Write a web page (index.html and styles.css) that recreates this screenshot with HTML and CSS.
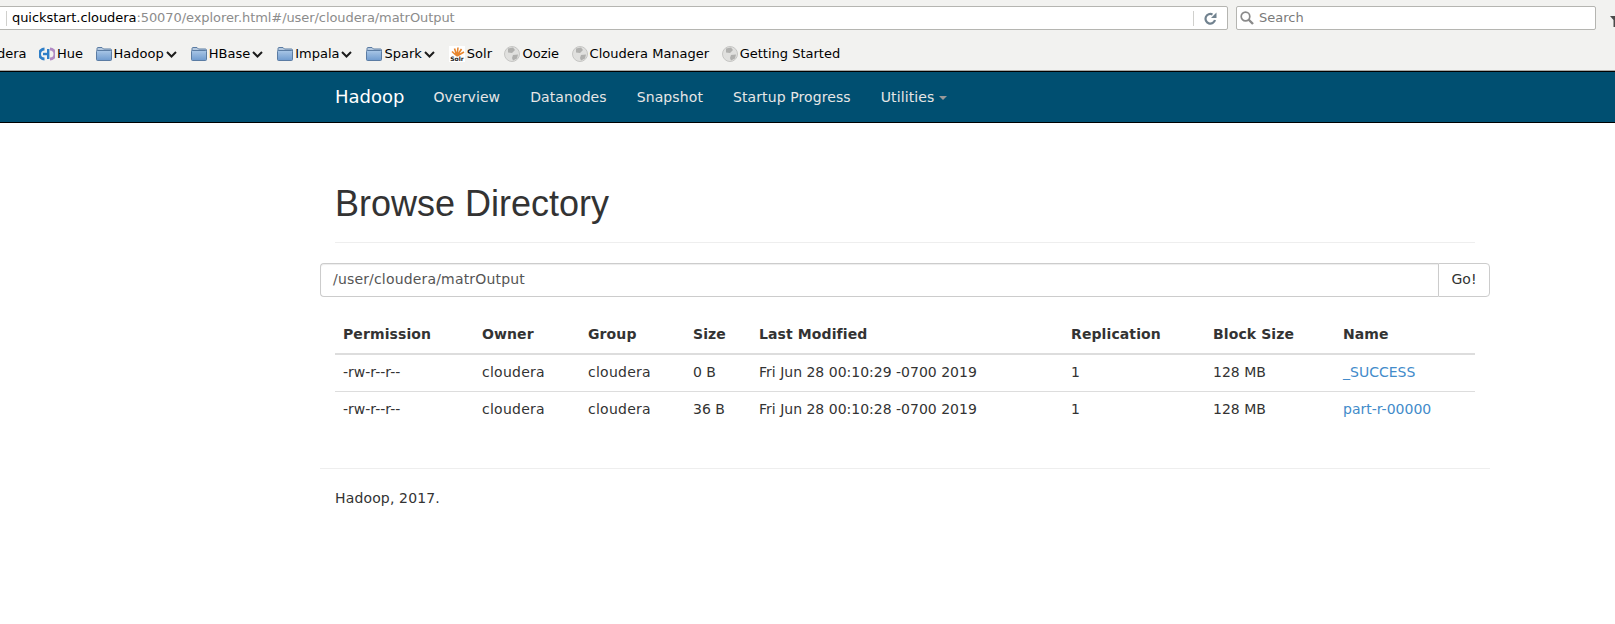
FILE: index.html
```html
<!DOCTYPE html>
<html lang="en">
<head>
  <meta charset="UTF-8">
  <title>Browsing HDFS</title>
  <link rel="stylesheet" href="styles.css">
</head>
<body>
  <svg class="defs" width="0" height="0">
    <defs>
      <linearGradient id="folder-fill" x1="0" y1="0" x2="0" y2="1">
        <stop offset="0" stop-color="#a9c6e6"/>
        <stop offset="1" stop-color="#6f9bcf"/>
      </linearGradient>
    </defs>
    <symbol id="folder" viewBox="0 0 16 16">
      <path d="M1 4V2.500C1 2 1.400 1.500 2 1.500H6L7.500 3H14.500C15 3 15.500 3.500 15.500 4V5H1Z" fill="#b4c8de" stroke="#5b7ca3"/>
      <rect x="0.500" y="4.500" width="15" height="10" rx="1" fill="url(#folder-fill)" stroke="#5b7ca3"/>
    </symbol>
    <symbol id="chevron" viewBox="0 0 11 7">
      <path d="M1 1L5.500 5.500L10 1" fill="none" stroke="#1c1c1c" stroke-width="2"/>
    </symbol>
    <symbol id="globe" viewBox="0 0 16 16">
      <circle cx="8" cy="8" r="7.500" fill="#e0e0de" stroke="#c6c6c4"/>
      <path d="M4 2.500L9 1.500L11 4L8 7L4 6.500ZM9 9L14 8.500L13 12.500L9 14.500L8 12Z" fill="#b0b0ae"/>
    </symbol>
  </svg>

  <div class="chrome">
    <div class="toolbar">
      <div class="urlbar">
        <span class="sep sep-left"></span>
        <span class="url"><span class="host">quickstart.cloudera</span>:50070/explorer.html#/user/cloudera/matrOutput</span>
        <span class="sep"></span>
        <svg class="reload" width="13" height="13" viewBox="0 0 13 13">
          <path d="M11 8A4.800 4.800 0 1 1 8.500 2.500" fill="none" stroke="#71828f" stroke-width="2.200"/>
          <path d="M12.500 0.500V6H7Z" fill="#71828f"/>
        </svg>
      </div>
      <div class="searchbar">
        <svg width="14" height="14" viewBox="0 0 14 14">
          <circle cx="5.500" cy="5.500" r="4.300" fill="none" stroke="#8a8a8a" stroke-width="1.700"/>
          <path d="M8.500 8.500L13 13" stroke="#8a8a8a" stroke-width="2.400"/>
        </svg>
        <span>Search</span>
      </div>
      <svg class="edge-icon" width="10" height="12" viewBox="0 0 10 12">
        <path d="M0 1H10L6.500 5V12H3.500V5Z" fill="#4a4a4a"/>
      </svg>
    </div>
    <div class="bookmarks">
      <span class="mark mark-first">dera</span>
      <span class="mark">
        <svg width="16" height="16" viewBox="0 0 16 16">
          <path d="M5.500 1.500A6.500 6.500 0 0 0 5.500 14.500V11.500A3.500 3.500 0 0 1 5.500 4.500Z" fill="#2f7fc8"/>
          <path d="M11 1.500A6.500 6.500 0 0 1 11 14.500V11.500A3.500 3.500 0 0 0 11 4.500Z" fill="#b08ac4"/>
          <rect x="4" y="6.800" width="6" height="2.400" fill="#2f7fc8"/>
          <rect x="8" y="3" width="2.400" height="10" fill="#2f7fc8"/>
        </svg>Hue</span>
      <span class="mark"><svg width="16" height="16"><use href="#folder"/></svg>Hadoop<svg class="chev" width="11" height="7"><use href="#chevron"/></svg></span>
      <span class="mark"><svg width="16" height="16"><use href="#folder"/></svg>HBase<svg class="chev" width="11" height="7"><use href="#chevron"/></svg></span>
      <span class="mark"><svg width="16" height="16"><use href="#folder"/></svg>Impala<svg class="chev" width="11" height="7"><use href="#chevron"/></svg></span>
      <span class="mark"><svg width="16" height="16"><use href="#folder"/></svg>Spark<svg class="chev" width="11" height="7"><use href="#chevron"/></svg></span>
      <span class="mark">
        <svg width="16" height="16" viewBox="0 0 16 16">
          <rect width="16" height="16" fill="#fff"/>
          <path d="M8 10L3 5.500M8 10L5.500 2.500M8 10L9 1.500M8 10L12.500 3M8 10L15 6" stroke="#e8862e" stroke-width="1.600"/>
          <text class="solr-word" x="8" y="15" text-anchor="middle">Solr</text>
        </svg>Solr</span>
      <span class="mark"><svg width="16" height="16"><use href="#globe"/></svg>Oozie</span>
      <span class="mark"><svg width="16" height="16"><use href="#globe"/></svg>Cloudera Manager</span>
      <span class="mark"><svg width="16" height="16"><use href="#globe"/></svg>Getting Started</span>
    </div>
  </div>

  <nav class="navbar">
    <div class="nav-inner">
      <a class="brand">Hadoop</a>
      <a>Overview</a>
      <a>Datanodes</a>
      <a>Snapshot</a>
      <a>Startup Progress</a>
      <a>Utilities <b class="caret"></b></a>
    </div>
  </nav>

  <div class="container">
    <div class="page-header">
      <h1>Browse Directory</h1>
    </div>

    <div class="input-group">
      <div class="form-control">/user/cloudera/matrOutput</div>
      <button class="go">Go!</button>
    </div>

    <div class="table-wrap">
      <table>
        <colgroup>
          <col class="c-perm"><col class="c-owner"><col class="c-group"><col class="c-size">
          <col class="c-date"><col class="c-repl"><col class="c-block"><col class="c-name">
        </colgroup>
        <thead>
          <tr>
            <th>Permission</th><th>Owner</th><th>Group</th><th>Size</th>
            <th>Last Modified</th><th>Replication</th><th>Block Size</th><th>Name</th>
          </tr>
        </thead>
        <tbody>
          <tr>
            <td>-rw-r--r--</td><td class="who">cloudera</td><td class="who">cloudera</td><td>0 B</td>
            <td>Fri Jun 28 00:10:29 -0700 2019</td><td>1</td><td>128 MB</td><td><a>_SUCCESS</a></td>
          </tr>
          <tr>
            <td>-rw-r--r--</td><td class="who">cloudera</td><td class="who">cloudera</td><td>36 B</td>
            <td>Fri Jun 28 00:10:28 -0700 2019</td><td>1</td><td>128 MB</td><td><a>part-r-00000</a></td>
          </tr>
        </tbody>
      </table>
    </div>

    <hr>
    <footer>Hadoop, 2017.</footer>
  </div>
</body>
</html>
```

FILE: styles.css
```css
body {
  margin: 0;
  height: 624px;
  overflow: hidden;
  background-color: #fff;
  color: #333;
  font-family: "DejaVu Sans", sans-serif;
  font-size: 14px;
  line-height: 20px;
}
.defs {
  display: block;
}

/* browser chrome */
.chrome {
  height: 70px;
  background-color: #f2f2f0;
  border-bottom: 1px solid #a8a8a5;
  overflow: hidden;
}
.toolbar {
  display: flex;
  align-items: flex-start;
  height: 37px;
  padding-top: 6px;
  box-sizing: border-box;
}
.urlbar {
  display: flex;
  align-items: center;
  flex: none;
  box-sizing: border-box;
  width: 1232px;
  height: 24px;
  margin-left: -4px;
  padding: 0 10px 0 9px;
  background-color: #fff;
  border: 1px solid #b5b5b1;
  border-radius: 2px;
}
.url {
  flex: 1;
  color: #8c8c8c;
  font-size: 13px;
  letter-spacing: -0.07px;
}
.host {
  color: #000;
}
.sep {
  width: 1px;
  height: 15px;
  margin-right: 10px;
  background-color: #d0d0cd;
}
.sep-left {
  margin-right: 5px;
}
.searchbar {
  display: flex;
  align-items: center;
  flex: none;
  gap: 5px;
  box-sizing: border-box;
  width: 360px;
  height: 24px;
  margin-left: 8px;
  padding-left: 3px;
  background-color: #fff;
  border: 1px solid #b5b5b1;
  border-radius: 2px;
  color: #7a7a7a;
  font-size: 13px;
}
.edge-icon {
  flex: none;
  margin: 9px 0 0 14px;
}
.bookmarks {
  display: flex;
  align-items: center;
  gap: 12.5px;
  box-sizing: border-box;
  height: 33px;
  padding-top: 1px;
  color: #000;
  font-size: 13px;
}
.mark {
  display: flex;
  align-items: center;
  gap: 2px;
  white-space: nowrap;
}
.mark-first {
  margin-left: -3px;
}
.chev {
  margin-right: 1.5px;
}
.solr-word {
  fill: #1c1c1c;
  font-family: "DejaVu Sans", sans-serif;
  font-size: 6px;
  font-weight: bold;
}

/* navbar */
.navbar {
  height: 50px;
  background-color: #004f71;
  border-top: 1px solid #000;
  border-bottom: 1px solid #000;
}
.nav-inner {
  display: flex;
  align-items: center;
  height: 50px;
  margin-left: 320px;
}
.nav-inner a {
  padding: 15px;
  color: #e6e6e6;
  letter-spacing: 0.1px;
}
.nav-inner .brand {
  padding-right: 14px;
  color: #fff;
  font-size: 18px;
  letter-spacing: 0;
}
.caret {
  display: inline-block;
  vertical-align: middle;
  border-top: 4px solid #999;
  border-left: 4px solid transparent;
  border-right: 4px solid transparent;
}

/* page */
.container {
  box-sizing: border-box;
  width: 1170px;
  margin-left: 320px;
}
.page-header {
  margin: 0 15px;
  padding-bottom: 18px;
  border-bottom: 1px solid #eee;
}
h1 {
  margin: 0;
  padding-top: 61px;
  color: #333;
  font-family: "Liberation Sans", sans-serif;
  font-size: 36px;
  font-weight: 500;
  line-height: 40px;
}
.input-group {
  display: flex;
  height: 34px;
  margin-top: 20px;
}
.form-control {
  flex: 1;
  padding: 5px 12px 7px;
  color: #555;
  letter-spacing: 0.17px;
  border: 1px solid #ccc;
  border-right: none;
  border-radius: 4px 0 0 4px;
  box-shadow: inset 0 1px 1px rgba(0, 0, 0, 0.075);
}
.go {
  width: 52px;
  padding: 0 0 2px;
  color: #333;
  background-color: #fff;
  border: 1px solid #ccc;
  border-radius: 0 4px 4px 0;
  font-family: inherit;
  font-size: 14px;
}
.table-wrap {
  margin: 20px 15px 0;
}
table {
  width: 1140px;
  border-collapse: collapse;
  table-layout: fixed;
}
th, td {
  padding: 7px 8px 9px;
  text-align: left;
}
th {
  letter-spacing: 0.1px;
  border-bottom: 2px solid #ddd;
}
td {
  border-top: 1px solid #ddd;
}
thead + tbody tr:first-child td {
  border-top: none;
}
td.who {
  letter-spacing: 0.25px;
}
td a {
  color: #428bca;
}
.c-perm { width: 139px; }
.c-owner { width: 106px; }
.c-group { width: 105px; }
.c-size { width: 66px; }
.c-date { width: 312px; }
.c-repl { width: 142px; }
.c-block { width: 130px; }
.c-name { width: 140px; }

hr {
  margin: 40px 0 0;
  border: none;
  border-top: 1px solid #eee;
}
footer {
  margin-top: 19px;
  padding-left: 15px;
  letter-spacing: 0.15px;
}
```
